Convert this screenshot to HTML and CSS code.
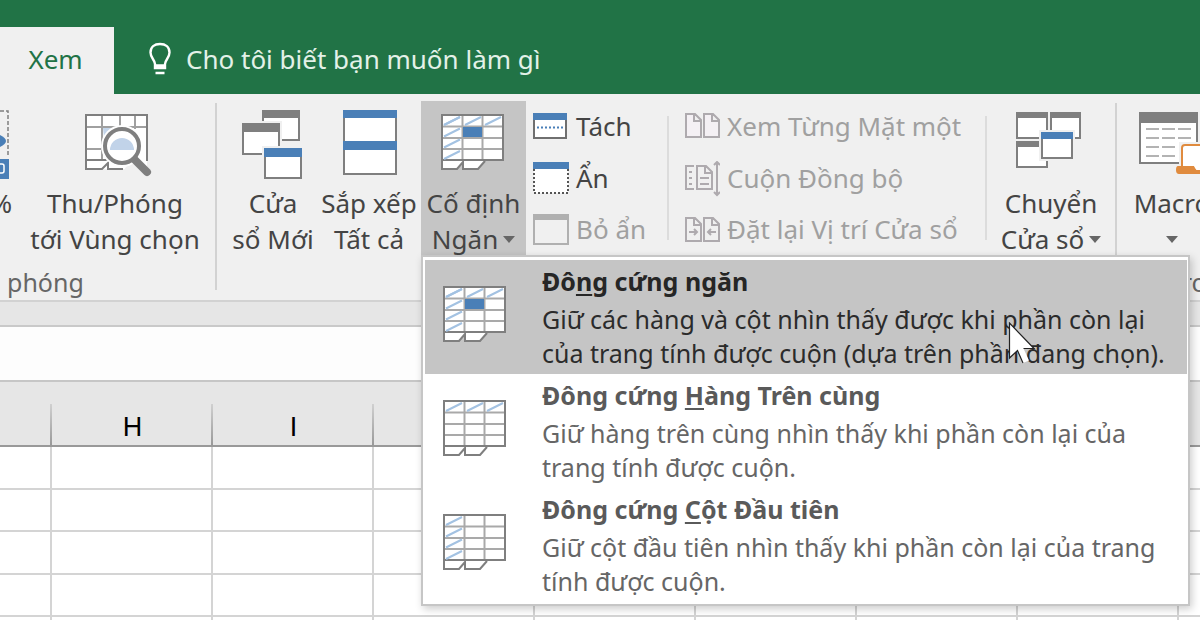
FILE: index.html
```html
<!DOCTYPE html>
<html lang="vi">
<head>
<meta charset="utf-8">
<title>Cố định Ngăn</title>
<link rel="stylesheet" href="styles.css">
</head>
<body>
<svg class="defs" aria-hidden="true">
  <symbol id="sheet" viewBox="0 0 63 56">
    <path d="M1 46V55H16L22 48V55H37L44 47" fill="#fff" stroke="#7f7f7f" stroke-width="2"/>
    <rect x="1" y="1" width="61" height="45" fill="#fff"/>
    <path d="M21.500 1V46M41.500 1V46M1 12.500H62M1 24H62M1 35H62" stroke="#a9a9a9" stroke-width="2" fill="none"/>
    <rect x="1" y="1" width="61" height="45" fill="none" stroke="#7f7f7f" stroke-width="2"/>
  </symbol>
  <symbol id="hatch-row" viewBox="0 0 63 56">
    <path d="M3 11L19 3M24 11L40 3M44 11L60 3" stroke="#a3c2e2" stroke-width="2"/>
  </symbol>
  <symbol id="hatch-col" viewBox="0 0 63 56">
    <path d="M3 11L19 3M3 22.500L19 14.500M3 33.500L19 25.500M3 45L19 37" stroke="#a3c2e2" stroke-width="2"/>
  </symbol>
</svg>

<header class="titlebar">
  <nav class="tabs">
    <button class="tab">Xem</button>
    <button class="tell">
      <svg width="24" height="34" viewBox="0 0 24 34" fill="none" stroke="#fff" stroke-width="2.400"><path d="M7 26V22C7 18 2.500 16 2.500 10.500C2.500 5 6.500 2 12 2S21.500 5 21.500 10.500C21.500 16 17 18 17 22V26ZM7 23.500H17M7.500 31H16.500"/></svg>
      <span>Cho tôi biết bạn muốn làm gì</span>
    </button>
  </nav>
</header>

<section class="ribbon">
  <div class="group zoom-group">
    <div class="tools">
      <button class="big cut-left" aria-label="Thu phóng phần trăm">
        <svg width="12" height="72" viewBox="0 0 12 72"><path d="M0 2H8V48" fill="none" stroke="#7f7f7f" stroke-width="1.500" stroke-dasharray="4 2"/><path d="M-4 26H0Q6 29 6 32T0 38H-4Z" fill="#4a7fb7"/><rect x="0" y="50" width="9" height="20" fill="#4a7fb7"/><rect x="-3" y="55" width="7" height="9" rx="2" fill="none" stroke="#fff" stroke-width="1.500"/></svg>
        <span>%</span>
      </button>
      <button class="big zoom-to">
        <svg width="74" height="72" viewBox="0 0 74 72">
          <path d="M8 6H69V60H8Z" fill="#fff"/>
          <path d="M24 6V52M42 6V20M57 6V20M8 18H69M8 40H31M8 51H31" stroke="#a0a0a0" stroke-width="2"/>
          <path d="M25 19H35L26 29Z" fill="#c3d5ea"/>
          <path d="M8 60V6H69V52M7 60H24L30 54V60H45M8 51H28" fill="none" stroke="#7f7f7f" stroke-width="2"/>
          <path d="M56 46L74 62L68 70L46 61Z" fill="#f0f0f0"/>
          <circle cx="44" cy="37" r="21" fill="#fff"/>
          <path d="M56 50L69 63" stroke="#7f7f7f" stroke-width="8" stroke-linecap="round"/>
          <circle cx="44" cy="37" r="17" fill="#fff" stroke="#7f7f7f" stroke-width="4"/>
          <path d="M32 41A12 12 0 1 1 56 41Z" fill="#c1d3e9"/>
        </svg>
        <span>Thu/Phóng<br>tới Vùng chọn</span>
      </button>
    </div>
    <div class="caption zoom-caption">phóng</div>
  </div>

  <div class="group window-group">
    <div class="tools">
      <button class="big">
        <svg width="72" height="72" viewBox="0 0 72 72">
          <rect x="26" y="2" width="36" height="29" fill="#fff" stroke="#7f7f7f" stroke-width="2"/><path d="M25 1H63V9H25Z" fill="#7f7f7f"/>
          <path d="M3 12H45V48H3Z" fill="#f0f0f0"/>
          <rect x="6" y="15" width="36" height="30" fill="#fff" stroke="#7f7f7f" stroke-width="2"/><path d="M5 14H43V23H5Z" fill="#7f7f7f"/>
          <path d="M25 37H67V72H25Z" fill="#f0f0f0"/>
          <rect x="28" y="40" width="36" height="29" fill="#fff" stroke="#7f7f7f" stroke-width="2"/><path d="M27 39H65V48H27Z" fill="#4a7fb7"/>
        </svg>
        <span>Cửa<br>sổ Mới</span>
      </button>
      <button class="big">
        <svg width="72" height="72" viewBox="0 0 72 72">
          <rect x="11" y="2" width="52" height="63" fill="#fff" stroke="#7f7f7f" stroke-width="2"/><path d="M10 1H64V9H10ZM10 32H64V41H10Z" fill="#4a7fb7"/>
        </svg>
        <span>Sắp xếp<br>Tất cả</span>
      </button>
      <div class="dropdown">
        <button class="big active" aria-expanded="true">
          <svg width="72" height="72" viewBox="0 0 72 72">
            <g transform="translate(3 5)"><use href="#sheet" width="63" height="56"/><use href="#hatch-row" width="63" height="56"/><use href="#hatch-col" width="63" height="56"/><rect x="22" y="13" width="19" height="10" fill="#4a7fb7"/></g>
          </svg>
          <span>Cố định<br>Ngăn<i class="arrow"></i></span>
        </button>
        <div class="menu">
          <button class="item selected">
            <svg width="63" height="56" viewBox="0 0 63 56"><use href="#sheet"/><use href="#hatch-row"/><use href="#hatch-col"/><rect x="22" y="13" width="19" height="10" fill="#4a7fb7"/></svg>
            <span class="copy"><b>Đô<u>n</u>g cứng ngăn</b><span>Giữ các hàng và cột nhìn thấy được khi phần còn lại<br>của trang tính được cuộn (dựa trên phần đang chọn).</span></span>
          </button>
          <button class="item">
            <svg width="63" height="56" viewBox="0 0 63 56"><use href="#sheet"/><use href="#hatch-row"/></svg>
            <span class="copy"><b>Đông cứng <u>H</u>àng Trên cùng</b><span>Giữ hàng trên cùng nhìn thấy khi phần còn lại của<br>trang tính được cuộn.</span></span>
          </button>
          <button class="item">
            <svg width="63" height="56" viewBox="0 0 63 56"><use href="#sheet"/><use href="#hatch-col"/></svg>
            <span class="copy"><b>Đông cứng <u>C</u>ột Đầu tiên</b><span>Giữ cột đầu tiên nhìn thấy khi phần còn lại của trang<br>tính được cuộn.</span></span>
          </button>
          <svg class="pointer" width="28" height="44" viewBox="0 0 28 44"><path d="M1.500 1V36L9.500 28.500L15 41L21 38.500L15.500 26.500H26Z" fill="#fff"/><path d="M15.500 26.500H26L1.500 1V36L9.500 28.500L15 41" fill="none" stroke="#222" stroke-width="1.200"/></svg>
        </div>
      </div>
      <div class="stack split-stack">
        <button class="small">
          <svg width="36" height="32" viewBox="0 0 36 32"><rect x="1" y="4" width="32" height="23" fill="#fff" stroke="#6f6f6f" stroke-width="2"/><path d="M0 2H34V9H0Z" fill="#4a7fb7"/><path d="M4 16.500H30" stroke="#4a7fb7" stroke-width="2" stroke-dasharray="2 2"/></svg>
          <span>Tách</span>
        </button>
        <button class="small">
          <svg width="36" height="36" viewBox="0 0 36 36"><path d="M1 6H35V32H1Z" fill="#fff"/><path d="M1 8V32H35V8" fill="none" stroke="#555" stroke-width="2" stroke-dasharray="2 2"/><path d="M0 1H36V8H0Z" fill="#4a7fb7"/></svg>
          <span>Ẩn</span>
        </button>
        <button class="small" disabled>
          <svg width="36" height="32" viewBox="0 0 36 32"><rect x="1" y="1" width="34" height="29" fill="#f0f0f0" stroke="#b0b0b0" stroke-width="2"/><path d="M0 0H36V6H0Z" fill="#b0b0b0"/></svg>
          <span>Bỏ ẩn</span>
        </button>
      </div>
      <div class="stack side-stack">
        <button class="small" disabled>
          <svg width="36" height="32" viewBox="0 0 36 32" fill="#f4f0f4" stroke="#aeaaae" stroke-width="2"><path d="M2 3H11L17 9V26H2ZM10 3V10H17M20 3H29L35 9V26H20ZM28 3V10H35"/></svg>
          <span>Xem Từng Mặt một</span>
        </button>
        <button class="small" disabled>
          <svg width="36" height="36" viewBox="0 0 36 36" fill="none" stroke="#aeaaae" stroke-width="2"><path d="M10 5H2V28H10M5 11H8M5 17H8M5 23H8M13 5H22L28 11V28H13ZM21 5V12H28M16 17H25M16 23H25M33 1V34M30 4L33 1L36 4M30 31L33 34L36 31"/></svg>
          <span>Cuộn Đồng bộ</span>
        </button>
        <button class="small" disabled>
          <svg width="36" height="32" viewBox="0 0 36 32" fill="none" stroke="#aeaaae" stroke-width="2"><path d="M2 4H11L17 10V27H2ZM10 4V11H17M20 4H29L35 10V27H20ZM28 4V11H35M5 18H13M10 15L13 18L10 21M32 18H24M27 15L24 18L27 21"/></svg>
          <span>Đặt lại Vị trí Cửa sổ</span>
        </button>
      </div>
      <button class="big switch">
        <svg width="72" height="72" viewBox="0 0 72 72">
          <g fill="#fff" stroke="#7f7f7f" stroke-width="2"><path d="M2 4H32V29H2ZM36 4H65V29H36ZM2 33H32V58H2Z"/></g>
          <path d="M1 3H33V9H1ZM35 3H66V9H35ZM1 32H33V38H1Z" fill="#7f7f7f"/>
          <path d="M24 21H60V52H24Z" fill="#f0f0f0"/>
          <rect x="27" y="24" width="30" height="25" fill="#fff" stroke="#7f7f7f" stroke-width="2"/><path d="M26 23H58V30H26Z" fill="#4a7fb7"/>
        </svg>
        <span>Chuyển<br>Cửa sổ<i class="arrow"></i></span>
      </button>
    </div>
  </div>

  <div class="group macro-group">
    <div class="tools">
      <button class="big macro">
        <svg width="72" height="72" viewBox="0 0 72 72">
          <rect x="4" y="4" width="57" height="50" fill="#fff" stroke="#7f7f7f" stroke-width="2"/><path d="M3 3H62V14H3Z" fill="#7f7f7f"/>
          <path d="M10 20H23M26 20H39M42 20H55M10 29H23M26 29H39M42 29H55M10 38H23M26 38H39M10 47H23M26 47H39" stroke="#b3b3b3" stroke-width="2"/>
          <path d="M43 33H72V67H38V55H43Z" fill="#f0f0f0"/>
          <path d="M46 58V39Q46 36 49 36H72V62H60L57 58Z" fill="#fff" stroke="#e08b3e" stroke-width="2"/>
          <path d="M42 57H58Q59 62 63 63H72V65H43Q40 65 40 61Q40 57 42 57Z" fill="#e08b3e"/>
        </svg>
        <span>Macro<br><i class="arrow"></i></span>
      </button>
    </div>
    <div class="caption macro-caption">Macro</div>
  </div>
</section>

<div class="strip"></div>
<div class="formula"></div>

<main class="sheet">
<table class="grid">
  <colgroup><col class="first"><col class="col"><col class="col"><col class="col"><col class="col"><col class="col"><col class="col"><col class="col"><col></colgroup>
  <thead><tr><th></th><th>H</th><th>I</th><th></th><th></th><th></th><th></th><th></th><th></th></tr></thead>
  <tbody>
    <tr><td></td><td></td><td></td><td></td><td></td><td></td><td></td><td></td><td></td></tr>
    <tr><td></td><td></td><td></td><td></td><td></td><td></td><td></td><td></td><td></td></tr>
    <tr><td></td><td></td><td></td><td></td><td></td><td></td><td></td><td></td><td></td></tr>
    <tr><td></td><td></td><td></td><td></td><td></td><td></td><td></td><td></td><td></td></tr>
    <tr><td></td><td></td><td></td><td></td><td></td><td></td><td></td><td></td><td></td></tr>
  </tbody>
</table>
</main>
</body>
</html>
```
FILE: styles.css
```css
* { box-sizing: border-box; }

body {
  display: flex;
  flex-direction: column;
  margin: 0;
  height: 100vh;
  overflow: hidden;
  background: #fff;
  color: #444;
  font: 26px/36px "Noto Sans", "Open Sans", sans-serif;
}

button {
  border: 0;
  padding: 0;
  background: none;
  color: inherit;
  font: inherit;
  white-space: nowrap;
}

svg { display: block; flex: none; }
.defs { position: absolute; width: 0; height: 0; }

.titlebar { flex: none; background: #217346; padding-top: 27px; }
.tabs { display: flex; height: 67px; }
.tab { width: 114px; padding: 0 3px 4px 0; background: #f0f0f0; color: #217346; }
.tell {
  display: flex;
  align-items: center;
  gap: 14px;
  margin-left: 34px;
  padding-bottom: 4px;
  color: #e3f1e8;
}

.ribbon {
  display: flex;
  flex: none;
  padding-top: 7px;
  background: #f0f0f0;
  border-bottom: 2px solid #d2d2d2;
}
.group { position: relative; flex: none; }
.tools { display: flex; height: 155px; }
.caption { margin-top: 8px; color: #666; font-size: 25px; }
.zoom-group { width: 217px; }
.zoom-caption { padding-left: 7px; }
.window-group { width: 900px; }
.window-group > .tools { padding-left: 8px; }
.zoom-group::after, .window-group::after {
  content: "";
  position: absolute;
  right: 0;
  top: 2px;
  bottom: 10px;
  width: 2px;
  background: #d2d2d2;
}
.macro-group { flex: 1 1 0; min-width: 0; overflow: hidden; }
.macro-caption { padding-left: 16px; }

.big {
  display: flex;
  flex: none;
  flex-direction: column;
  align-items: center;
  gap: 4px;
  width: 96px;
  padding-top: 8px;
}
.cut-left { width: 12px; align-items: flex-end; overflow: hidden; }
.zoom-to { width: 172px; margin-left: 17px; }
.dropdown { position: relative; margin-left: 4px; }
.active { width: 105px; height: 155px; background: #c5c5c5; }
.switch { width: 128px; }
.macro { width: 110px; }

.arrow {
  display: inline-block;
  margin-left: 5px;
  vertical-align: 6px;
  border: 6px solid transparent;
  border-top: 7px solid #666;
  border-bottom: 0;
}
.macro .arrow { margin-left: 0; }

.stack { display: flex; flex: none; flex-direction: column; height: 155px; }
.split-stack { width: 143px; padding-left: 7px; }
.side-stack { width: 318px; padding-left: 15px; }
.split-stack, .side-stack {
  background: linear-gradient(#dcdcdc, #dcdcdc) right 15px / 2px 124px no-repeat;
}
.stack .small { height: 52px; }
.small { display: flex; align-items: center; gap: 7px; }
.small span { padding-bottom: 2px; }
.small:disabled { color: #a0a0a0; }

.menu {
  position: absolute;
  z-index: 2;
  left: 0;
  top: 154px;
  width: 769px;
  padding: 3px 1px 2px 2px;
  background: #fff;
  border: 2px solid #c6c6c6;
  box-shadow: 2px 3px 8px rgba(0, 0, 0, .2);
  font-size: 25px;
}
.item {
  display: flex;
  gap: 36px;
  width: 100%;
  padding: 4px 0 4px 18px;
  color: #666;
  line-height: 34px;
  text-align: left;
}
.item svg { margin-top: 22px; }
.selected { background: #c5c5c5; color: #2b2b2b; }
.copy { display: flex; flex-direction: column; gap: 4px; }
.item b { color: #5a5a5a; }
.selected b { color: #262626; }
.item u { text-decoration-thickness: 2px; text-underline-offset: 3px; text-decoration-skip-ink: none; }
.pointer { position: absolute; left: 585px; top: 65px; }

.strip { flex: none; height: 25px; background: #e6e6e6; border-bottom: 2px solid #c9c9c9; }
.formula { flex: none; height: 55px; background: #fdfdfd; border-bottom: 2px solid #c6c6c6; }

.sheet { flex: 1; min-height: 0; overflow: hidden; }
.grid { width: 100%; table-layout: fixed; border-collapse: separate; border-spacing: 0; }
.first { width: 52px; }
.col { width: 161px; }
.grid th {
  height: 65px;
  padding: 26px 0 0;
  border-bottom: 2px solid #999;
  background: linear-gradient(#d0d0d0, #999) right bottom / 2px 41px no-repeat #e6e6e6;
  color: #000;
  font: 27px/36px "Liberation Sans", Arial, sans-serif;
}
.grid td { height: 43px; padding: 0; border: solid #d4d4d4; border-width: 0 2px 2px 0; }
.grid tr:nth-child(even) td { height: 42px; }
.grid th:last-child { background: #e6e6e6; }
.grid td:last-child { border-right: 0; }
```
